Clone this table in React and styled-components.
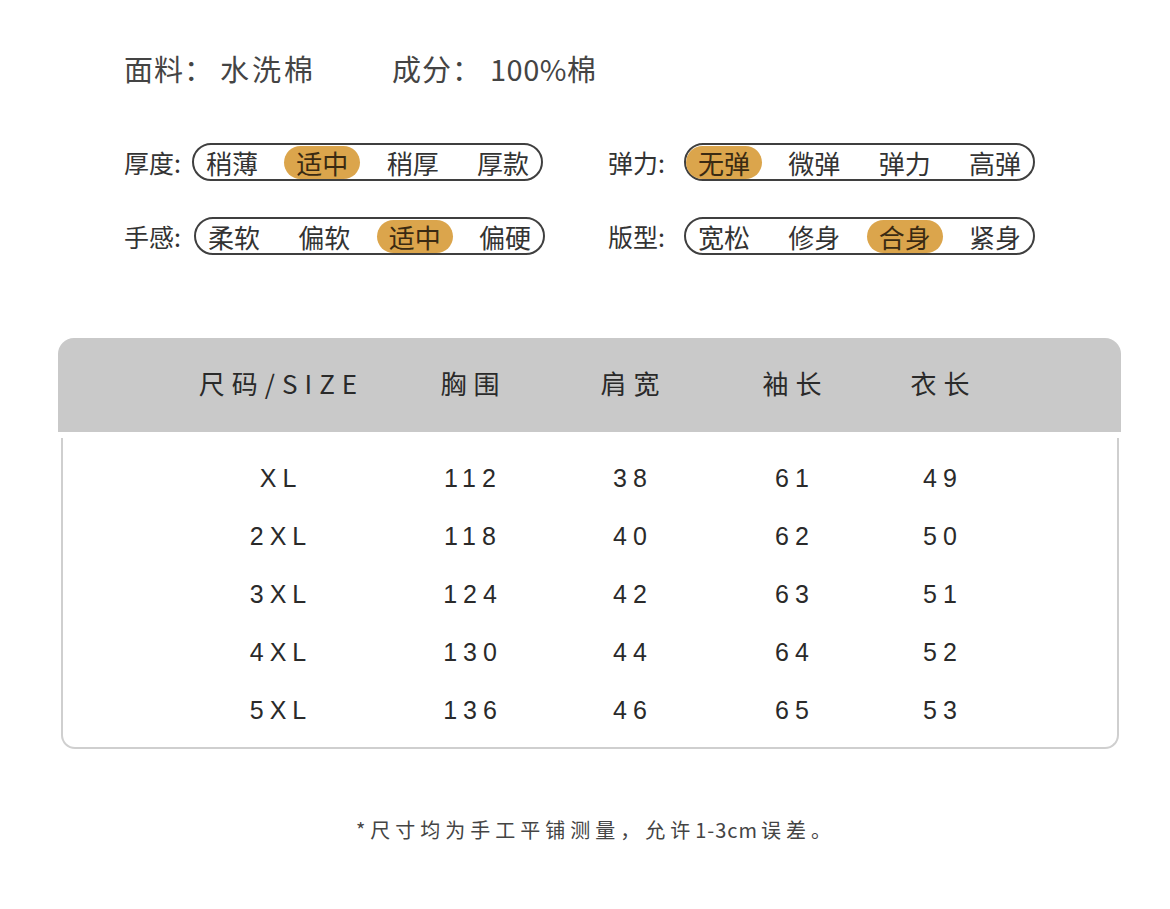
import React from "react";
import styled, { createGlobalStyle } from "styled-components";

const GlobalStyle = createGlobalStyle`
  body {
    margin: 0;
    background: #fff;
    font-family: "Noto Sans CJK SC", "Noto Sans", sans-serif;
    color: #333;
  }
`;

const traits = [
  { label: "厚度:", w: 68, options: ["稍薄", "适中", "稍厚", "厚款"], active: 1 },
  { label: "弹力:", w: 76, options: ["无弹", "微弹", "弹力", "高弹"], active: 0 },
  { label: "手感:", w: 70, options: ["柔软", "偏软", "适中", "偏硬"], active: 2 },
  { label: "版型:", w: 76, options: ["宽松", "修身", "合身", "紧身"], active: 2 },
];

const sizes = [
  ["XL", "112", "38", "61", "49"],
  ["2XL", "118", "40", "62", "50"],
  ["3XL", "124", "42", "63", "51"],
  ["4XL", "130", "44", "64", "52"],
  ["5XL", "136", "46", "65", "53"],
];

const headers = ["尺码/SIZE", "胸围", "肩宽", "袖长", "衣长"];

export default function App() {
  return (
    <Page>
      <GlobalStyle />
      <Fabric>
        <FabricItem>
          面料：<Value>水洗棉</Value>
        </FabricItem>
        <FabricItem>
          成分：<Value $latin>100%棉</Value>
        </FabricItem>
      </Fabric>

      <TraitGrid>
        {traits.map((t) => (
          <Trait key={t.label}>
            <TraitLabel $w={t.w}>{t.label}</TraitLabel>
            <Pill>
              {t.options.map((o, i) => (
                <Option key={o} $active={i === t.active}>
                  {o}
                </Option>
              ))}
            </Pill>
          </Trait>
        ))}
      </TraitGrid>

      <Table>
        <HeadRow>
          {headers.map((h) => (
            <HeadCell key={h}>{h}</HeadCell>
          ))}
        </HeadRow>
        <Body>
          {sizes.map((row) => (
            <Row key={row[0]}>
              {row.map((c, i) => (
                <Cell key={i}>{c}</Cell>
              ))}
            </Row>
          ))}
        </Body>
      </Table>

      <Note>
        *尺寸均为手工平铺测量，允许<Tight>1-3cm</Tight>误差。
      </Note>
    </Page>
  );
}

const Page = styled.div`
  width: 1170px;
  height: 909px;
  box-sizing: border-box;
  padding-top: 48px;
  overflow: hidden;
`;

const Fabric = styled.div`
  display: flex;
  padding-left: 124px;
  height: 40px;
  align-items: center;
`;

const FabricItem = styled.div`
  width: 268px;
  font-size: 29px;
  letter-spacing: 1px;
  color: #444;
  white-space: nowrap;
`;

const Value = styled.span`
  margin-left: ${(p) => (p.$latin ? "8px" : "6px")};
  letter-spacing: ${(p) => (p.$latin ? "0.5px" : "3px")};
`;

const TraitGrid = styled.div`
  display: grid;
  grid-template-columns: 484px 430px;
  row-gap: 36px;
  padding-left: 124px;
  margin-top: 55px;
`;

const Trait = styled.div`
  display: flex;
  align-items: center;
`;

const TraitLabel = styled.div`
  width: ${(p) => p.$w}px;
  font-size: 25px;
  color: #333;
  white-space: nowrap;
`;

const Pill = styled.div`
  width: 351px;
  height: 38px;
  box-sizing: border-box;
  border: 2px solid #3f3f3f;
  border-radius: 19px;
  display: flex;
  align-items: center;
  justify-content: space-between;
`;

const Option = styled.div`
  height: 33px;
  line-height: 33px;
  padding: 0 12px;
  border-radius: 17px;
  font-size: 26px;
  color: ${(p) => (p.$active ? "#3a2a12" : "#333")};
  background: ${(p) => (p.$active ? "#dba54c" : "transparent")};
`;

const Table = styled.div`
  width: 1063px;
  margin: 83px 0 0 58px;
`;

const HeadRow = styled.div`
  height: 94px;
  box-sizing: border-box;
  padding-bottom: 6px;
  background: #c9c9c9;
  border-radius: 16px 16px 0 0;
  display: grid;
  grid-template-columns: 124px 192px 192px 128px 196px 100px;
  align-items: center;
  & > :first-child {
    grid-column: 2;
  }
`;

const HeadCell = styled.div`
  text-align: center;
  font-size: 26px;
  letter-spacing: 7px;
  padding-left: 7px;
  color: #2a2a2a;
`;

const Body = styled.div`
  margin: 6px 2px 0 3px;
  box-sizing: border-box;
  border: 2px solid #cfcfcf;
  border-top: none;
  border-radius: 0 0 14px 14px;
  padding: 11px 0 8px;
`;

const Row = styled.div`
  height: 58px;
  display: grid;
  grid-template-columns: 119px 192px 192px 128px 196px 100px;
  align-items: center;
  & > :first-child {
    grid-column: 2;
  }
`;

const Cell = styled.div`
  text-align: center;
  font-family: "Liberation Sans", Arial, sans-serif;
  font-size: 25px;
  letter-spacing: 6px;
  padding-left: 6px;
  color: #2a2a2a;
`;

const Note = styled.div`
  margin-top: 66px;
  height: 30px;
  line-height: 30px;
  text-align: center;
  padding-left: 22px;
  font-size: 20px;
  letter-spacing: 5px;
  color: #444;
`;

const Tight = styled.span`
  letter-spacing: 1px;
  margin-right: 3px;
`;
